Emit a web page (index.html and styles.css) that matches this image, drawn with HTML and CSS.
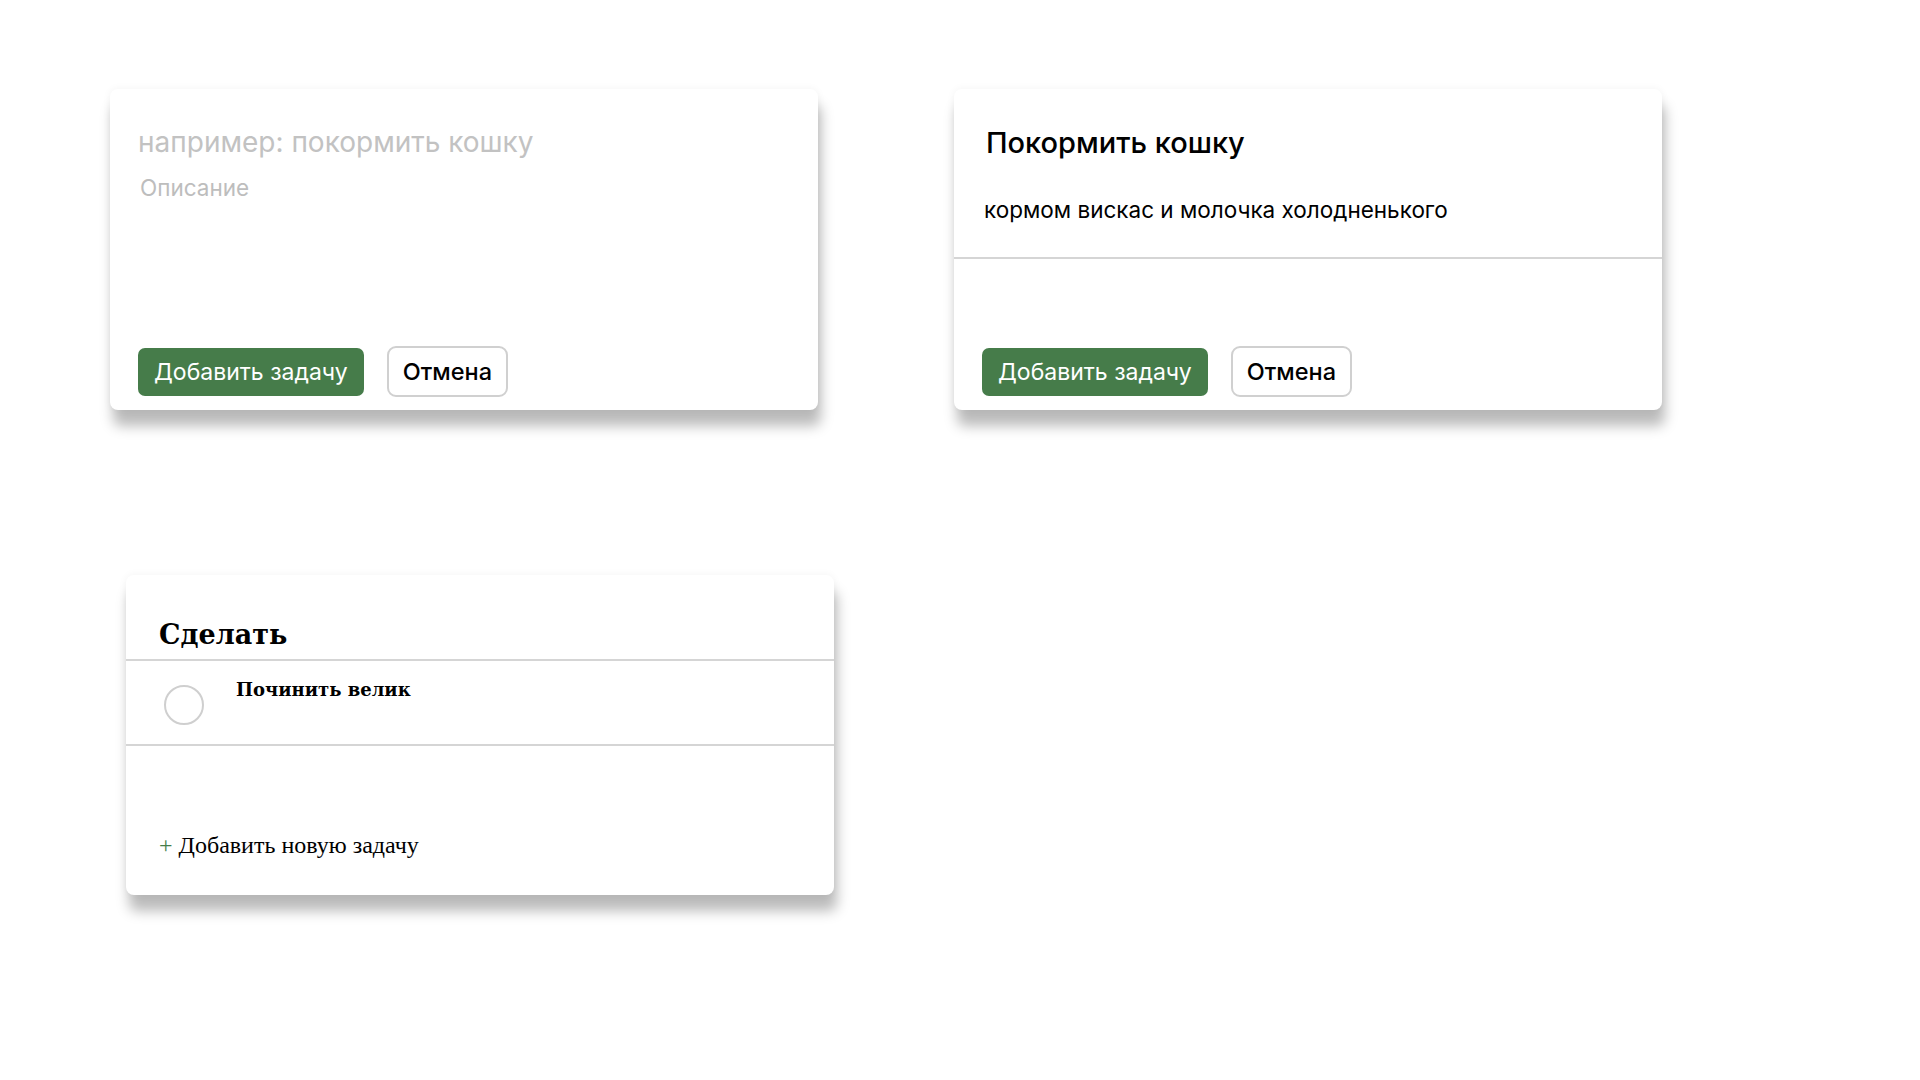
FILE: index.html
```html
<!DOCTYPE html>
<html lang="ru">
<head>
<meta charset="utf-8">
<title>Задачи</title>
<link rel="stylesheet" href="styles.css">
</head>
<body>
<div class="page">
  <div class="row row-top">
    <form class="card editor">
      <input class="title-input" type="text" placeholder="например: покормить кошку">
      <textarea class="desc-input" placeholder="Описание"></textarea>
      <div class="actions">
        <button type="button" class="btn btn-primary">Добавить задачу</button>
        <button type="button" class="btn btn-cancel">Отмена</button>
      </div>
    </form>

    <div class="card editor filled">
      <div class="filled-body">
        <div class="filled-title">Покормить кошку</div>
        <div class="filled-desc">кормом вискас и молочка холодненького</div>
      </div>
      <div class="actions">
        <button type="button" class="btn btn-primary">Добавить задачу</button>
        <button type="button" class="btn btn-cancel">Отмена</button>
      </div>
    </div>
  </div>

  <div class="row row-bottom">
    <div class="card list">
      <h2 class="list-title">Сделать</h2>
      <div class="task">
        <span class="check"></span>
        <span class="task-name">Починить велик</span>
      </div>
      <div class="add-task"><span class="plus">+</span> Добавить новую задачу</div>
    </div>
  </div>
</div>
</body>
</html>
```

FILE: styles.css
```css
* { box-sizing: border-box; }
html, body { margin: 0; padding: 0; background: #fff; }
body { width: 1920px; height: 1080px; overflow: hidden; }

.page { padding-top: 89px; }

.row { display: flex; }
.row-top { padding-left: 110px; gap: 136px; }
.row-bottom { padding-left: 126px; margin-top: 165px; }

.card {
  background: #fff;
  border-radius: 8px;
  box-shadow: 3px 16px 13px rgba(0, 0, 0, 0.27), 0 0 8px rgba(0, 0, 0, 0.05);
  width: 708px;
}

.editor {
  height: 321px;
  display: flex;
  flex-direction: column;
  font-family: Inter, "Liberation Sans", Arial, sans-serif;
  padding: 0 0 13px 0;
  margin: 0;
}
form.editor { padding-top: 35px; }

.title-input {
  border: none;
  outline: none;
  font-family: Inter, "Liberation Sans", Arial, sans-serif;
  font-size: 28px;
  height: 36px;
  padding: 0 28px;
  margin: 0;
  background: transparent;
}
.title-input::placeholder { color: #c2c2c2; }

.desc-input {
  border: none;
  outline: none;
  resize: none;
  font-family: Inter, "Liberation Sans", Arial, sans-serif;
  font-size: 22.5px;
  line-height: 26px;
  padding: 0 30px;
  margin: 15px 0 0 0;
  height: 60px;
  background: transparent;
}
.desc-input::placeholder { color: #bdbdbd; }

.actions {
  margin-top: auto;
  display: flex;
  gap: 23px;
  padding-left: 28px;
  align-items: center;
}

.btn {
  font-family: Inter, "Liberation Sans", Arial, sans-serif;
  cursor: pointer;
}
.btn-primary {
  background: #467c4a;
  color: #fff;
  border: none;
  height: 48px;
  padding: 0 16px;
  border-radius: 7px;
  font-size: 23px;
}
.btn-cancel {
  background: #fff;
  color: #000;
  border: 2px solid #d0d0d0;
  height: 51px;
  padding: 0 14px;
  border-radius: 9px;
  font-size: 23.5px;
  font-weight: 500;
}

.filled .filled-body {
  border-bottom: 2px solid #d5d5d5;
  padding: 36px 0 0 0;
  height: 170px;
}
.filled .actions { margin-top: auto; padding-top: 1px; }
.filled-title {
  font-size: 29px;
  font-weight: 500;
  color: #000;
  padding-left: 32px;
  line-height: 36px;
}
.filled-desc {
  font-size: 22.5px;
  color: #000;
  padding-left: 30px;
  margin-top: 36px;
  line-height: 26px;
}

.list {
  height: 320px;
  font-family: "Liberation Serif", "Times New Roman", serif;
  display: flex;
  flex-direction: column;
}
.list-title {
  margin: 0;
  padding: 42px 0 0 33px;
  height: 86px;
  font-family: "DejaVu Serif", serif;
  font-size: 27px;
  font-weight: bold;
  border-bottom: 2px solid #d5d5d5;
  line-height: 36px;
}
.task {
  display: flex;
  height: 85px;
  border-bottom: 2px solid #d5d5d5;
  padding: 17px 0 0 38px;
}
.check {
  width: 40px;
  height: 40px;
  border: 2px solid #cfcfcf;
  border-radius: 50%;
  margin-top: 7px;
  flex: none;
}
.task-name {
  font-family: "DejaVu Serif", serif;
  font-weight: bold;
  font-size: 18px;
  margin-left: 32px;
  line-height: 24px;
}
.add-task {
  margin-top: 86px;
  padding-left: 33px;
  font-size: 24px;
  color: #000;
}
.plus { color: #467c4a; }
```
